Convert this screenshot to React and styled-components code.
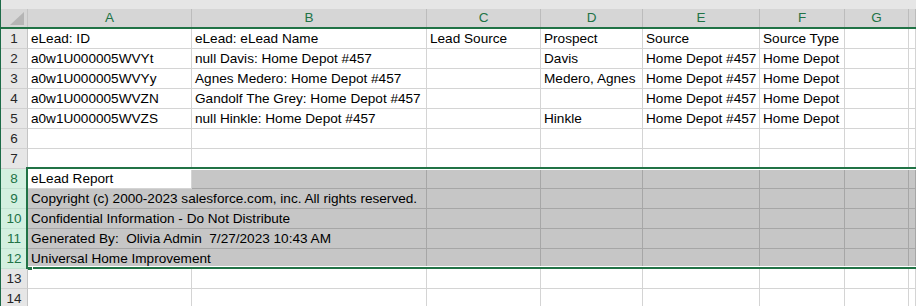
import * as React from 'react'
import styled, { createGlobalStyle } from 'styled-components'

const GlobalStyle = createGlobalStyle`
  body {
    margin: 0;
    overflow: hidden;
    background: #ffffff;
    font-family: "Liberation Sans", Arial, sans-serif;
  }
`

const COLUMNS = '27px 164px 235px 114px 102px 117px 85px 64px 1fr'
const GREEN = '#217346'

const Window = styled.div`
  width: 916px;
  height: 306px;
  overflow: hidden;
  border-left: 1px solid #1d6b48;
  box-sizing: border-box;
  background: #ffffff;
`

const TopStrip = styled.div`
  height: 9px;
  background: #e6e6e6;
`

const HeaderRow = styled.div`
  display: grid;
  grid-template-columns: ${COLUMNS};
  height: 20px;
  background: #d6d6d6;
  border-bottom: 2px solid ${GREEN};
  box-sizing: border-box;
`

const Corner = styled.div`
  border-right: 1px solid #c4c4c4;
  display: flex;
  align-items: flex-end;
  justify-content: flex-end;
  padding: 0 3px 2px 0;
`

const ColHead = styled.div`
  border-right: 1px solid #bcbcbc;
  color: ${GREEN};
  font-size: 13.5px;
  display: flex;
  align-items: center;
  justify-content: center;
  line-height: 1;
`

const Row = styled.div`
  display: grid;
  grid-template-columns: ${COLUMNS};
  height: 20px;
`

const RowNum = styled.div`
  box-sizing: border-box;
  border-right: 1px solid #c4c4c4;
  border-bottom: 1px solid ${(p) => (p.$sel ? '#c3e3d2' : '#d0d0d0')};
  background: ${(p) => (p.$sel ? '#d3f0e0' : '#e6e6e6')};
  color: ${(p) => (p.$sel ? GREEN : '#262626')};
  font-size: 13.5px;
  display: flex;
  align-items: center;
  justify-content: center;
`

const Cell = styled.div`
  box-sizing: border-box;
  min-width: 0;
  border-bottom: 1px solid ${(p) => (p.$sel ? '#a6a6a6' : '#d4d4d4')};
  border-right: ${(p) =>
    p.$spill ? 'none' : `1px solid ${p.$sel ? '#a6a6a6' : '#d4d4d4'}`};
  background: ${(p) => (p.$sel ? '#c6c6c6' : '#ffffff')};
  display: flex;
  align-items: flex-end;
  padding: 0 2px 2px 3px;
  font-size: 13.6px;
  line-height: 15px;
  color: #000000;
  white-space: pre;
  overflow: ${(p) => (p.$spill ? 'visible' : 'hidden')};
`

const CellText = styled.span`
  position: relative;
  z-index: 1;
`

const Selection = styled.div`
  position: relative;
`

const SelectionBox = styled.div`
  position: absolute;
  left: 25px;
  top: -2px;
  right: -4px;
  bottom: 0;
  border: 2px solid ${GREEN};
  box-shadow: inset 0 1px 0 #ffffff, inset 0 -1px 0 #ffffff;
  pointer-events: none;
  z-index: 2;
`

const Handle = styled.div`
  position: absolute;
  left: 0;
  bottom: -4px;
  width: 5px;
  height: 5px;
  background: ${GREEN};
  border: 1px solid #ffffff;
  border-left: none;
  box-sizing: border-box;
`

const letters = ['A', 'B', 'C', 'D', 'E', 'F', 'G', '']

const data = [
  ['eLead: ID', 'eLead: eLead Name', 'Lead Source', 'Prospect', 'Source', 'Source Type'],
  ['a0w1U000005WVYt', 'null Davis: Home Depot #457', '', 'Davis', 'Home Depot #457', 'Home Depot'],
  ['a0w1U000005WVYy', 'Agnes Medero: Home Depot #457', '', 'Medero, Agnes', 'Home Depot #457', 'Home Depot'],
  ['a0w1U000005WVZN', 'Gandolf The Grey: Home Depot #457', '', '', 'Home Depot #457', 'Home Depot'],
  ['a0w1U000005WVZS', 'null Hinkle: Home Depot #457', '', 'Hinkle', 'Home Depot #457', 'Home Depot'],
  [],
  [],
]

const footer = [
  'eLead Report',
  'Copyright (c) 2000-2023 salesforce.com, inc. All rights reserved.',
  'Confidential Information - Do Not Distribute',
  'Generated By:  Olivia Admin  7/27/2023 10:43 AM',
  'Universal Home Improvement',
]

const SheetRow = ({ num, values = [], sel, activeFirst, spillFirst }) => (
  <Row>
    <RowNum $sel={sel}>{num}</RowNum>
    {letters.map((l, i) => (
      <Cell
        key={i}
        $sel={sel && !(activeFirst && i === 0)}
        $spill={spillFirst && i === 0}
      >
        {values[i] ? <CellText>{values[i]}</CellText> : null}
      </Cell>
    ))}
  </Row>
)

const App = () => {
  return (
    <Window>
      <GlobalStyle />
      <TopStrip />
      <HeaderRow>
        <Corner>
          <svg width="14" height="13" viewBox="0 0 14 13">
            <polygon points="14,0 14,13 0,13" fill="#b5b5b5" />
          </svg>
        </Corner>
        {letters.map((l, i) => (
          <ColHead key={i}>{l}</ColHead>
        ))}
      </HeaderRow>

      {data.map((values, i) => (
        <SheetRow key={i} num={i + 1} values={values} />
      ))}

      <Selection>
        {footer.map((text, i) => (
          <SheetRow
            key={i}
            num={i + 8}
            values={[text]}
            sel
            activeFirst={i === 0}
            spillFirst={i > 0}
          />
        ))}
        <SelectionBox>
          <Handle />
        </SelectionBox>
      </Selection>

      <SheetRow num={13} />
      <SheetRow num={14} />
    </Window>
  )
}

export default App
